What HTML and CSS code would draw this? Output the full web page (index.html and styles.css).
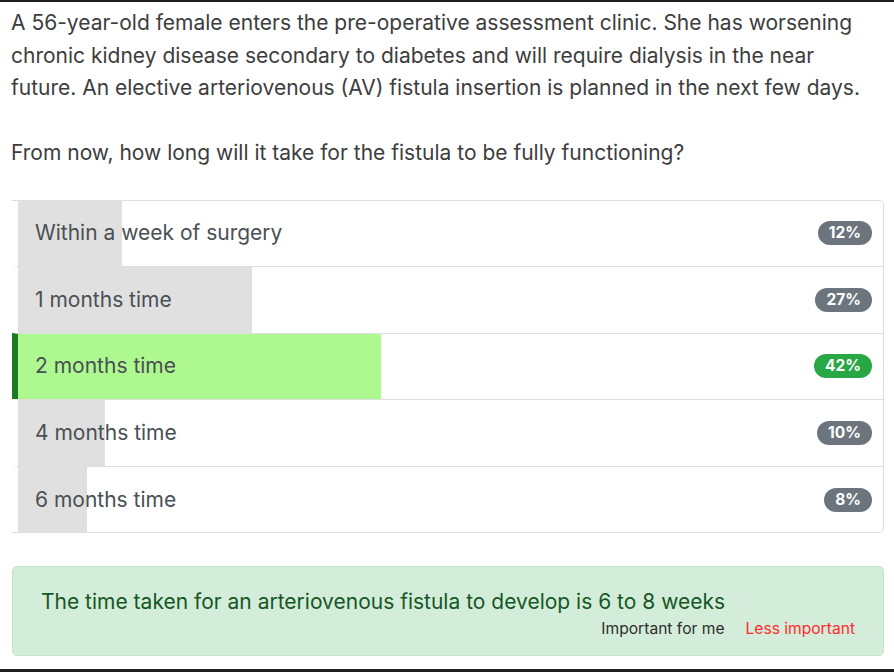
FILE: index.html
```html
<!DOCTYPE html>
<html>
<head>
<meta charset="utf-8">
<link rel="stylesheet" href="styles.css">
</head>
<body>
<div class="frame">
  <p class="stem">A 56-year-old female enters the pre-operative assessment clinic. She has worsening chronic kidney disease secondary to diabetes and will require dialysis in the near future. An elective arteriovenous (AV) fistula insertion is planned in the next few days.<br><br>From now, how long will it take for the fistula to be fully functioning?</p>

  <ul class="options">
    <li class="option" style="--pct:12%"><span class="label">Within a week of surgery</span><span class="badge">12%</span></li>
    <li class="option" style="--pct:27%"><span class="label">1 months time</span><span class="badge">27%</span></li>
    <li class="option correct" style="--pct:42%"><span class="label">2 months time</span><span class="badge badge-green">42%</span></li>
    <li class="option" style="--pct:10%"><span class="label">4 months time</span><span class="badge">10%</span></li>
    <li class="option" style="--pct:8%"><span class="label">6 months time</span><span class="badge">8%</span></li>
  </ul>

  <div class="feedback">
    <div class="feedback-text">The time taken for an arteriovenous fistula to develop is 6 to 8 weeks</div>
    <div class="feedback-actions">
      <span class="imp">Important for me</span>
      <span class="less">Less important</span>
    </div>
  </div>
</div>
</body>
</html>
```

FILE: styles.css
```css
html, body {
  margin: 0;
  padding: 0;
  background: #fff;
}
.frame {
  box-sizing: border-box;
  height: 672px;
  border-top: 2px solid #1e1e1e;
  border-bottom: 3px solid #1e1e1e;
  padding: 0 10px 0 12px;
  font-family: Inter, "Liberation Sans", Arial, sans-serif;
  overflow: hidden;
}
.stem {
  margin: 5px 0 0 -1px;
  font-size: 21px;
  line-height: 32.5px;
  color: #3d3d3d;
}
.options {
  list-style: none;
  margin: 30px 0 0 0;
  padding: 0;
  border: 1px solid #dedede;
  border-left: none;
  border-radius: 0 5px 5px 0;
}
.option {
  display: flex;
  align-items: center;
  justify-content: space-between;
  border-left: 6px solid transparent;
  border-top: 1px solid #dfdfdf;
  padding: 17.8px 11px 17.8px 17px;
  line-height: 30px;
  font-size: 21px;
  color: #4a4f54;
  background: linear-gradient(to right, #e0e0e0 var(--pct), transparent var(--pct));
  background-clip: padding-box;
}
.option:first-child {
  border-top: none;
}
.option.correct {
  border-left-color: #1b7a22;
  background: linear-gradient(to right, #adf98f var(--pct), transparent var(--pct));
  background-clip: padding-box;
}
.badge {
  background: #6c757d;
  color: #fff;
  font-weight: 700;
  font-size: 15.5px;
  line-height: 18px;
  padding: 3px 11px;
  border-radius: 12px;
}
.badge-green {
  background: #28a745;
}
.feedback {
  margin-top: 33px;
  background: #d4edda;
  border: 1px solid #c3e6cb;
  border-radius: 5px;
  padding: 20px 28px 14px 28px;
}
.feedback-text {
  font-size: 21px;
  line-height: 30px;
  color: #155724;
}
.feedback-actions {
  display: flex;
  justify-content: flex-end;
  gap: 21px;
  font-size: 15.6px;
  line-height: 24px;
}
.imp {
  color: #2e2e2e;
}
.less {
  color: #ff2a2a;
}
```
